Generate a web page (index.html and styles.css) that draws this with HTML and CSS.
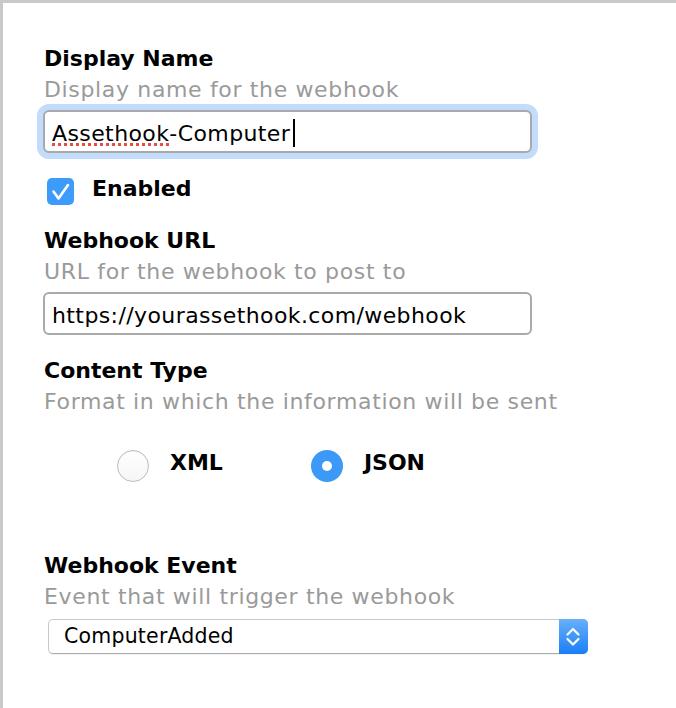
FILE: index.html
```html
<!DOCTYPE html>
<html lang="en">
<head>
<meta charset="utf-8">
<title>Webhook</title>
<link rel="stylesheet" href="styles.css">
</head>
<body>
<div class="window">
  <form class="form">
    <section class="field">
      <div class="label">Display Name</div>
      <div class="desc">Display name for the webhook</div>
      <div class="textbox focused"><span class="misspelled">Assethook</span>-Computer<span class="caret"></span></div>
    </section>

    <div class="check-row">
      <span class="checkbox">
        <svg width="27" height="27" viewBox="0 0 27 27"><polyline points="6.5,13.5 11.5,20.5 21,7" fill="none" stroke="#fff" stroke-width="2.6" stroke-linecap="round" stroke-linejoin="round"/></svg>
      </span>
      <span class="check-label">Enabled</span>
    </div>

    <section class="field field-gap">
      <div class="label">Webhook URL</div>
      <div class="desc">URL for the webhook to post to</div>
      <div class="textbox">https://yourassethook.com/webhook</div>
    </section>

    <section class="field field-gap">
      <div class="label">Content Type</div>
      <div class="desc">Format in which the information will be sent</div>
      <div class="radio-row">
        <div class="radio-option">
          <span class="radio"></span>
          <span class="radio-label">XML</span>
        </div>
        <div class="radio-option">
          <span class="radio checked"><span class="dot"></span></span>
          <span class="radio-label">JSON</span>
        </div>
      </div>
    </section>

    <section class="field field-event">
      <div class="label">Webhook Event</div>
      <div class="desc">Event that will trigger the webhook</div>
      <div class="select">
        <span class="select-value">ComputerAdded</span>
        <span class="stepper">
          <svg width="29" height="35" viewBox="0 0 29 35"><polyline points="8.5,15.5 14,10 19.5,15.5" fill="none" stroke="#fff" stroke-width="2.2" stroke-linecap="round" stroke-linejoin="round"/><polyline points="8.5,20 14,25.5 19.5,20" fill="none" stroke="#fff" stroke-width="2.2" stroke-linecap="round" stroke-linejoin="round"/></svg>
        </span>
      </div>
    </section>
  </form>
</div>
</body>
</html>
```

FILE: styles.css
```css
html, body {
  margin: 0;
  height: 100%;
  background: #fff;
}

body {
  font-family: "DejaVu Sans", "Liberation Sans", sans-serif;
  color: #000;
}

.window {
  box-sizing: border-box;
  height: 100%;
  border-top: 3px solid #c9c9c9;
  border-left: 3px solid #c9c9c9;
}

.form {
  margin: 0;
  padding: 40px 0 0 41px;
}

.label {
  font-size: 22px;
  font-weight: bold;
  line-height: 31px;
}

.desc {
  font-size: 22px;
  line-height: 31px;
  color: #9a9a9a;
  letter-spacing: 0.65px;
}

.textbox {
  box-sizing: border-box;
  width: 489px;
  height: 43px;
  margin: 5px 0 0 -1px;
  padding: 4px 7px 0;
  border: 2px solid #a9a9a9;
  border-radius: 6px;
  font-size: 22px;
  line-height: 35px;
  letter-spacing: 0.4px;
  white-space: nowrap;
  background: #fff;
}

.focused {
  box-shadow: 0 0 0 6px #c1ddfb;
}

.misspelled {
  text-decoration: underline dotted #ec4a45;
  text-decoration-thickness: 3px;
  text-underline-offset: 2px;
}

.caret {
  display: inline-block;
  width: 2px;
  height: 28px;
  margin-left: 3px;
  vertical-align: -6px;
  background: #000;
}

.check-row {
  display: flex;
  align-items: flex-start;
  margin-top: 20px;
}

.checkbox {
  display: block;
  width: 27px;
  height: 27px;
  margin: 5px 0 0 3px;
  border-radius: 5px;
  background: #3d9bfb;
}

.checkbox svg {
  display: block;
}

.check-label {
  margin-left: 18px;
  font-size: 22px;
  font-weight: bold;
  line-height: 31px;
}

.field-gap {
  margin-top: 20px;
}

.radio-row {
  display: flex;
  align-items: flex-start;
  gap: 88px;
  margin-top: 30px;
  padding-left: 73px;
}

.radio-option {
  display: flex;
  align-items: flex-start;
  gap: 21px;
}

.radio {
  box-sizing: border-box;
  display: flex;
  align-items: center;
  justify-content: center;
  width: 32px;
  height: 32px;
  margin-top: 3px;
  border: 1px solid #bdbdbd;
  border-radius: 50%;
  background: linear-gradient(#ffffff, #f6f6f6);
  box-shadow: inset 0 1px 1px rgba(0, 0, 0, 0.04);
}

.radio.checked {
  border: none;
  background: #3d99f8;
  box-shadow: none;
}

.dot {
  width: 10px;
  height: 10px;
  border-radius: 50%;
  background: #fff;
}

.radio-label {
  font-size: 22px;
  font-weight: bold;
  line-height: 31px;
}

.field-event {
  margin-top: 68px;
}

.select {
  box-sizing: border-box;
  display: flex;
  width: 540px;
  height: 35px;
  margin: 7px 0 0 4px;
  border: 1px solid #c9c9c9;
  border-bottom-color: #ababab;
  border-radius: 5px;
  box-shadow: 0 1px 1px rgba(0, 0, 0, 0.06);
  background: #fff;
}

.select-value {
  flex: 1;
  padding-left: 15px;
  font-size: 20.5px;
  line-height: 33px;
  letter-spacing: 0.2px;
}

.stepper {
  display: block;
  width: 29px;
  margin: -1px -1px -1px 0;
  border-radius: 0 5px 5px 0;
  background: linear-gradient(#68b0fb, #1b7ef7);
}

.stepper svg {
  display: block;
}
```
